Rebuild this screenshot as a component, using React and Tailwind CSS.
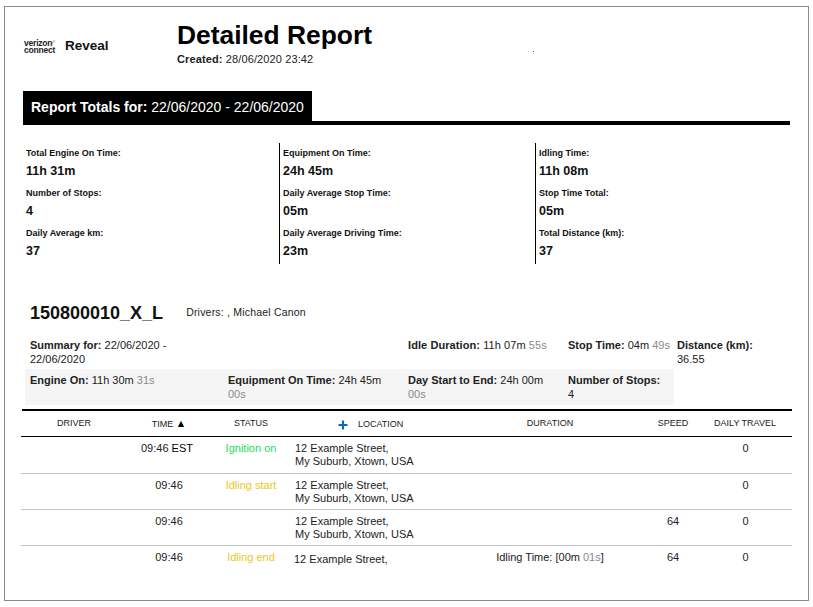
const font = { fontFamily: '"Liberation Sans", Arial, sans-serif' };

function Stat({ label, value, first }) {
  return (
    <div className={first ? "" : "mt-[9px]"}>
      <div className="text-[9px] leading-[13px] font-bold text-[#111]">{label}</div>
      <div className="mt-[4px] text-[12.5px] leading-[14px] font-bold text-[#111]">{value}</div>
    </div>
  );
}

function StatCol({ items, className }) {
  return (
    <div className={className}>
      {items.map((s, i) => (
        <Stat key={s[0]} label={s[0]} value={s[1]} first={i === 0} />
      ))}
    </div>
  );
}

function Sum({ label, value, grey, className = "" }) {
  return (
    <div className={`text-[11px] leading-[14px] text-[#222] ${className}`}>
      <span className="font-bold">{label}</span> {value}
      {grey ? <span className="text-[#8a8a8a]"> {grey}</span> : null}
    </div>
  );
}

const cols = "grid grid-cols-[106px_84px_80px_164px_190px_56px_88px]";

function Row({ time, zone, status, color, line2, duration, speed, border = true, h = "h-[36px]", locClass = "pl-[4px]" }) {
  return (
    <div className={`${cols} ${h} pt-[5px] text-[11px] leading-[13px] text-[#222] ${border ? "border-b border-[#c4c4c4]" : ""}`}>
      <div />
      <div className={`text-center whitespace-nowrap ${zone ? "pr-[4px]" : ""}`}>
        {time}
        {zone ? <span className="text-black"> {zone}</span> : null}
      </div>
      <div className={`text-center ${color}`}>{status}</div>
      <div className={`${locClass} whitespace-nowrap`}>
        <div>12 Example Street,</div>
        {line2 ? <div>My Suburb, Xtown, USA</div> : null}
      </div>
      <div className="text-center">{duration}</div>
      <div className="text-center">{speed}</div>
      <div className="text-center pl-[1px]">0</div>
    </div>
  );
}

export default function App() {
  return (
    <div style={font} className="w-[813px] h-[607px] bg-white pl-[4px] pt-[6px] overflow-hidden">
      <div className="w-[805px] h-[595px] border border-[#8c8c8c] overflow-hidden">
        {/* Header */}
        <div className="flex h-[84px] pl-[19px]">
          <div className="flex items-center w-[153px] h-[41px] mt-[19px]">
            <div className="text-[8.5px] leading-[7px] font-bold tracking-[-0.2px] text-[#222] w-[41px]">
              <div>verizon<span className="text-[#c44] font-normal">⁄</span></div>
              <div>connect</div>
            </div>
            <div className="text-[13.5px] font-bold text-[#111]">Reveal</div>
          </div>
          <div>
            <div className="mt-[12px] text-[26.4px] leading-[33px] font-bold text-black whitespace-nowrap">Detailed Report</div>
            <div className="text-[11px] leading-[14px] tracking-[0.12px] text-[#222]">
              <span className="font-bold">Created:</span> 28/06/2020 23:42
            </div>
          </div>
          <div className="ml-[161px] mt-[44px] w-px h-px bg-[#444]" />
        </div>

        {/* Report totals */}
        <div className="flex items-end mx-[18px] h-[34px] border-b-4 border-black">
          <div className="w-[289px] h-[34px] -mb-[4px] bg-black text-white pl-[8px] pt-[9px] text-[14px] leading-[14px] whitespace-nowrap">
            <span className="font-bold">Report Totals for:</span> 22/06/2020 - 22/06/2020
          </div>
        </div>

        {/* Stats */}
        <div className="flex ml-[18px] mt-[18px] h-[121px]">
          <StatCol
            className="w-[256px] pl-[3px] pt-[4px]"
            items={[["Total Engine On Time:", "11h 31m"], ["Number of Stops:", "4"], ["Daily Average km:", "37"]]}
          />
          <StatCol
            className="w-[256px] border-l border-black pl-[3px] pt-[4px]"
            items={[["Equipment On Time:", "24h 45m"], ["Daily Average Stop Time:", "05m"], ["Daily Average Driving Time:", "23m"]]}
          />
          <StatCol
            className="w-[250px] border-l border-black pl-[3px] pt-[4px]"
            items={[["Idling Time:", "11h 08m"], ["Stop Time Total:", "05m"], ["Total Distance (km):", "37"]]}
          />
        </div>

        {/* Vehicle */}
        <div className="flex items-center ml-[25px] mt-[37px] h-[24px]">
          <div className="text-[18px] leading-[24px] font-bold text-[#111]">150800010_X_L</div>
          <div className="ml-[23px] text-[10.5px] tracking-[0.2px] text-[#222]">Drivers: , Michael Canon</div>
        </div>

        {/* Summary */}
        <div className="grid grid-cols-[203px_180px_160px_106px_1fr] ml-[20px] mt-[13px] w-[770px]">
          <Sum className="pl-[5px] pr-[16px] h-[31px]" label="Summary for:" value="22/06/2020 - 22/06/2020" />
          <div />
          <Sum className="tracking-[0.08px]" label="Idle Duration:" value="11h 07m" grey="55s" />
          <Sum className="whitespace-nowrap" label="Stop Time:" value="04m" grey="49s" />
          <Sum className="pl-[3px] pr-[30px]" label="Distance (km):" value="36.55" />
          <div className="col-span-4 grid grid-cols-[203px_180px_160px_106px] bg-[#f5f5f5] h-[36px] pt-[4px]">
            <Sum className="pl-[5px]" label="Engine On:" value="11h 30m" grey="31s" />
            <Sum className="pr-[10px]" label="Equipment On Time:" value="24h 45m" grey="00s" />
            <Sum className="pr-[20px]" label="Day Start to End:" value="24h 00m" grey="00s" />
            <Sum className="pr-[10px]" label="Number of Stops:" value="4" />
          </div>
        </div>

        {/* Table */}
        <div className="ml-[16px] w-[771px] mt-[4px]">
          <div className="ml-[1px] h-[2px] bg-black" />
          <div className={`${cols} h-[26px] pt-[6px] border-b border-black text-[9px] leading-[13px] text-[#222]`}>
            <div className="text-center">DRIVER</div>
            <div className="text-center whitespace-nowrap">TIME <span className="text-[10.5px] text-black">▲</span></div>
            <div className="text-center">STATUS</div>
            <div className="flex items-center pl-[47px] whitespace-nowrap h-[15px]">
              <svg width="10" height="10" viewBox="0 0 10 10" className="mr-[10px]">
                <path d="M5 .5v9M.5 5h9" stroke="#1565c0" strokeWidth="2.2" fill="none" />
              </svg>
              LOCATION
            </div>
            <div className="text-center">DURATION</div>
            <div className="text-center">SPEED</div>
            <div className="text-center whitespace-nowrap">DAILY TRAVEL</div>
          </div>
          <Row h="h-[37px]" time="09:46" zone="EST" status="Ignition on" color="text-[#22e05a]" line2 />
          <Row time="09:46" status="Idling start" color="text-[#e8c81e]" line2 />
          <Row time="09:46" status="" color="" line2 speed="64" />
          <Row
            time="09:46"
            status="Idling end"
            color="text-[#e8c81e]"
            border={false}
            locClass="pl-[3px] pt-[2px]"
            duration={<span>Idling Time: [00m <span className="text-[#7f8c94]">01s</span>]</span>}
            speed="64"
          />
        </div>
      </div>
    </div>
  );
}
